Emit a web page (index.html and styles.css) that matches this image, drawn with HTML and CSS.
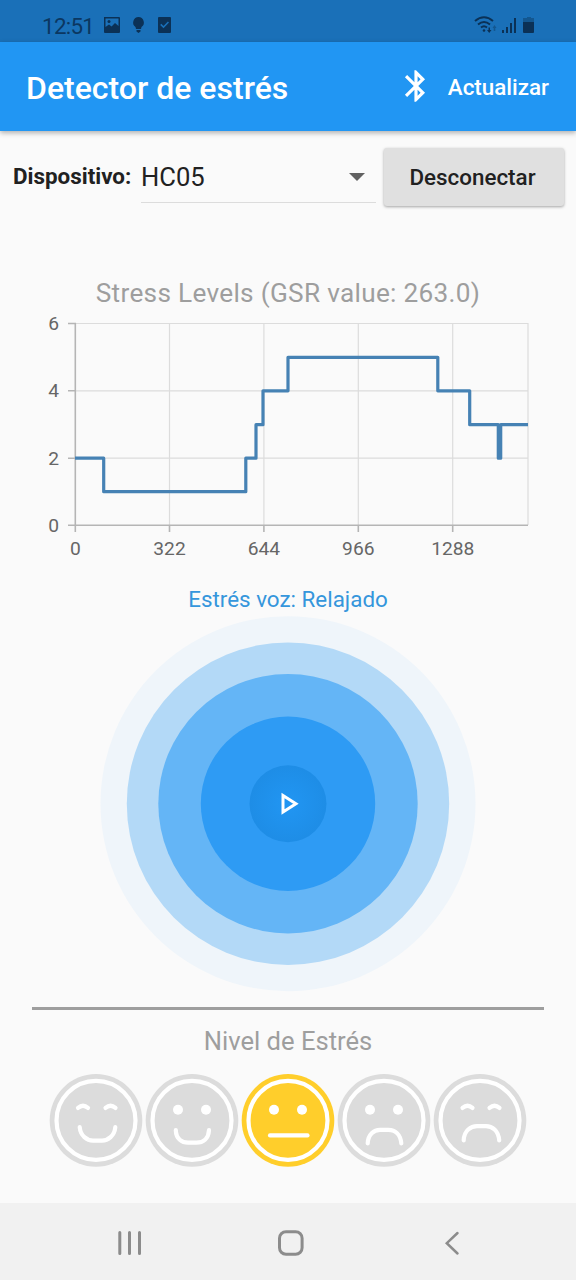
FILE: index.html
```html
<!DOCTYPE html>
<html lang="es">
<head>
<meta charset="utf-8">
<title>Detector de estrés</title>
<link rel="stylesheet" href="styles.css">
</head>
<body>
<div class="screen">
  <div class="statusbar">
    <span class="clock">12:51</span>
    <svg class="notifications" width="70" height="20" viewBox="0 0 70 20">
      <path fill-rule="evenodd" d="M1 2H16Q17 2 17 3V17Q17 18 16 18H2Q1 18 1 17ZM2.500 3.500V12L6 9.500L8.500 11.500L12 8L15.500 11V3.500Z"/>
      <circle cx="6" cy="6.500" r="1.500"/>
      <path d="M35.500 2A5.500 5.500 0 0 1 38.500 12L38 14H33L32.500 12A5.500 5.500 0 0 1 35.500 2ZM33.500 15H37.500V16.500L35.500 18L33.500 16.500Z"/>
      <path fill-rule="evenodd" d="M56 2H67Q68 2 68 3V17Q68 18 67 18H56Q55 18 55 17V3Q55 2 56 2ZM58.300 8.800L57.200 10L60.500 13.200L66 7.500L64.900 6.500L60.500 11Z"/>
    </svg>
    <svg class="signals" width="62" height="20" viewBox="0 0 62 20">
      <g class="wifi"><path d="M1 6Q10 -1.500 19 6M4 9.500Q10 4.500 16 9.500M7 12.500Q10 10 13 12.500"/></g>
      <circle cx="10" cy="15.500" r="1.300"/>
      <path d="M13 15H14.500V12.500H16V15H17.500L15.200 18Z"/>
      <path opacity=".4" d="M18.500 13L20.500 10L22.500 13H21.300V16H19.700V13Z"/>
      <path d="M28 15H30V18H28ZM32 12H34V18H32ZM36 8H38V18H36ZM40 3H42V18H40Z"/>
      <path opacity=".4" d="M51 3H53V2H57V3H60V8H49V3Z"/>
      <path d="M49 7H60V17Q60 18 59 18H50Q49 18 49 17Z"/>
    </svg>
  </div>
  <header class="appbar">
    <h1 class="appbar-title">Detector de estrés</h1>
    <svg class="bluetooth" width="38" height="38" viewBox="0 0 24 24"><path d="M17.710 7.710L12 2h-1v7.590L6.410 5 5 6.410 10.590 12 5 17.590 6.410 19 11 14.410V22h1l5.710-5.710-4.300-4.290 4.300-4.290zM13 5.830l1.880 1.880L13 9.590V5.830zm1.880 10.460L13 18.170v-3.760l1.880 1.880z"/></svg>
    <span class="refresh">Actualizar</span>
  </header>
  <main class="content">
    <div class="device">
      <span class="device-label">Dispositivo:</span>
      <div class="select">
        <span class="select-value">HC05</span>
        <svg width="16" height="8" viewBox="0 0 16 8"><path fill="#616161" d="M0 0H16L8 8Z"/></svg>
      </div>
      <button class="disconnect">Desconectar</button>
    </div>
    <h2 class="chart-title"><span>Stress Levels (GSR value: 263.0)</span></h2>
    <svg class="chart" width="576" height="260" viewBox="0 310 576 260">
      <path class="grid" d="M75 323.500H528V525M75 390.800H528M75 458.200H528M169.500 323.500V525M263.900 323.500V525M358.300 323.500V525M452.700 323.500V525"/>
      <path class="axis" d="M68 323.500H75.300V532M68 390.800H75M68 458.200H75M68 525.300H528M169.500 525V532M263.900 525V532M358.300 525V532M452.700 525V532"/>
      <path class="series" d="M75 458.200H103.700V491.700H245.800V458.200H256V424.700H263V390.800H288V357.300H437.800V390.800H469.700V424.700H498.300V458.200H500.700V424.700H528"/>
      <g class="y-labels">
        <text x="59" y="330">6</text><text x="59" y="397">4</text>
        <text x="59" y="464.500">2</text><text x="59" y="531.500">0</text>
      </g>
      <g class="x-labels">
        <text x="75.300" y="555.400">0</text><text x="169.500" y="555.400">322</text>
        <text x="263.900" y="555.400">644</text><text x="358.300" y="555.400">966</text>
        <text x="452.700" y="555.400">1288</text>
      </g>
    </svg>
    <p class="voice"><span>Estrés voz: Relajado</span></p>
    <svg class="pulse" width="376" height="376" viewBox="-188 -187.700 376 376">
      <defs><radialGradient id="core"><stop offset="0" stop-color="#2196f3"/><stop offset="1" stop-color="#1e8de6"/></radialGradient></defs>
      <circle r="187.500" fill="#eff5fa"/>
      <circle r="161.200" fill="#b3d9f7"/>
      <circle r="129.700" fill="#64b5f6"/>
      <circle r="87.200" fill="#2e9bf4"/>
      <circle r="38.500" fill="url(#core)"/>
      <path fill="none" stroke="#fff" stroke-width="3" d="M-5 -8.200V8.200L7.900 0Z"/>
    </svg>
    <div class="divider"></div>
    <h2 class="level-title"><span>Nivel de Estrés</span></h2>
    <div class="faces">
      <svg class="face" viewBox="-48 -48.400 96 96"><circle class="disc" r="46.300"/><circle class="ring" r="39.500"/>
        <path d="M-18 -12.500Q-13 -16.800 -8 -12.500M9.500 -12.500Q14.500 -16.800 19.500 -12.500M-16.300 6.700C-15.500 15.500 -9 20.200 -3 20.200H6C12 20.200 18.500 15.500 19.300 6.700"/></svg>
      <svg class="face" viewBox="-48 -48.400 96 96"><circle class="disc" r="46.300"/><circle class="ring" r="39.500"/>
        <circle class="eye" cx="-14" cy="-10.700" r="5"/><circle class="eye" cx="14" cy="-10.700" r="5"/>
        <path d="M-16.200 9.700C-16 18.500 -10 22.300 -4 22.300H4.500C11 22.300 16.500 18.500 17 9.700"/></svg>
      <svg class="face selected" viewBox="-48 -48.400 96 96"><circle class="disc" r="46.300"/><circle class="ring" r="39.500"/>
        <circle class="eye" cx="-14" cy="-10.700" r="5"/><circle class="eye" cx="14" cy="-10.700" r="5"/>
        <path d="M-18 15H19.500"/></svg>
      <svg class="face" viewBox="-48 -48.400 96 96"><circle class="disc" r="46.300"/><circle class="ring" r="39.500"/>
        <circle class="eye" cx="-14" cy="-10.700" r="5"/><circle class="eye" cx="14" cy="-10.700" r="5"/>
        <path d="M-16.300 23C-16 13.800 -10 9.500 -4 9.500H4.500C11 9.500 16.500 13.800 17.300 23"/></svg>
      <svg class="face" viewBox="-48 -48.400 96 96"><circle class="disc" r="46.300"/><circle class="ring" r="39.500"/>
        <path d="M-17.500 -12.500Q-12.500 -16.800 -7.500 -12.500M9.500 -12.500Q14.500 -16.800 19.500 -12.500M-16.300 20C-16 10 -9 5.700 -3 5.700H6C12 5.700 18.500 10 19.200 20"/></svg>
    </div>
  </main>
  <nav class="navbar">
    <svg width="576" height="77" viewBox="0 0 576 77">
      <path d="M119.800 29.500V50.500M129.500 29.500V50.500M139.500 29.500V50.500"/>
      <rect x="279.500" y="28.700" width="22.600" height="22.600" rx="6.500"/>
      <path class="back" d="M457.500 30L446.800 40.200L457.500 50.500"/>
    </svg>
  </nav>
</div>
</body>
</html>
```
FILE: styles.css
```css
body {
  margin: 0;
  font-family: Roboto, "Noto Sans", sans-serif;
  color: #212121;
  background: #fafafa;
}
h1, h2, p { margin: 0; font-weight: 400; }
svg { display: block; flex: none; }
.screen {
  display: flex;
  flex-direction: column;
  width: 576px;
  height: 1280px;
  overflow: hidden;
  background: #fafafa;
}
.statusbar {
  display: flex;
  align-items: center;
  height: 42px;
  box-sizing: border-box;
  padding: 9px 40px 0 42px;
  background: #1a70b8;
  color: #0b3761;
}
.statusbar svg { fill: #0b3156; margin-top: -1px; }
.clock { font-size: 22.4px; line-height: 32px; width: 61px; letter-spacing: -.7px; white-space: nowrap; }
.statusbar .signals { margin-left: auto; }
.wifi { fill: none; stroke: #0b3156; stroke-width: 2; }
.appbar {
  display: flex;
  align-items: center;
  height: 89px;
  box-sizing: border-box;
  padding: 2px 26px 0;
  flex: none;
  color: #fff;
  background: #2196f3;
  box-shadow: 0 2px 5px rgba(0, 0, 0, .3);
}
.appbar-title { font-size: 32px; font-weight: 500; white-space: nowrap; }
.bluetooth { fill: #fff; margin-left: auto; margin-right: 13px; margin-top: -3px; }
.refresh { font-size: 22.4px; font-weight: 500; margin-top: -2px; margin-right: 1px; }
.content { display: flex; flex-direction: column; align-items: center; height: 1072px; }
.device {
  display: flex;
  align-items: flex-start;
  width: 576px;
  height: 147px;
  box-sizing: border-box;
  padding: 17px 12px 0 13px;
}
.device-label { width: 128px; font-size: 22.4px; line-height: 57px; font-weight: 700; white-space: nowrap; }
.select {
  display: flex;
  align-items: center;
  justify-content: space-between;
  width: 235px;
  height: 55px;
  box-sizing: border-box;
  padding: 3px 11px 0 0;
  border-bottom: 1px solid #dcdcdc;
}
.select-value { font-size: 25.6px; }
.disconnect {
  width: 180px;
  height: 58px;
  margin-left: 8px;
  border: 0;
  border-radius: 3px;
  padding: 0 3px 1px 0;
  font: 500 22.4px Roboto, sans-serif;
  color: #212121;
  background: #e0e0e0;
  box-shadow: 0 1px 3px rgba(0, 0, 0, .35);
}
.chart-title { height: 32px; line-height: 30px; font-size: 26.2px; letter-spacing: .3px; color: #9e9e9e; white-space: nowrap; }
.grid { fill: none; stroke: #dcdcdc; stroke-width: 1.200; }
.axis { fill: none; stroke: #b5b5b5; stroke-width: 1.600; }
.series { fill: none; stroke: #4682b4; stroke-width: 3.200; stroke-linejoin: round; }
.chart text { font-size: 19.2px; fill: #666; }
.y-labels { text-anchor: end; }
.x-labels { text-anchor: middle; }
.voice { height: 45px; line-height: 58px; font-size: 22.4px; color: #3596dc; white-space: nowrap; }
.pulse { margin-top: 1px; }
.divider { width: 512px; height: 3px; margin-top: 15px; background: #9e9e9e; flex: none; }
.level-title { height: 62px; line-height: 62px; font-size: 25.6px; color: #9e9e9e; white-space: nowrap; }
.faces { display: grid; grid-template-columns: repeat(5, 96px); }
.face { width: 96px; height: 96px; fill: none; stroke: #fff; stroke-width: 4.200; stroke-linecap: round; stroke-linejoin: round; }
.face .disc { fill: #dcdcdc; stroke: none; }
.face .eye { fill: #fff; stroke: none; }
.face.selected .disc { fill: #ffce2b; }
.navbar { height: 77px; background: #f1f1f1; }
.navbar svg { fill: none; stroke: #8c8c8c; stroke-width: 3; stroke-linecap: round; }
.navbar .back { stroke-width: 2.500; }
```
